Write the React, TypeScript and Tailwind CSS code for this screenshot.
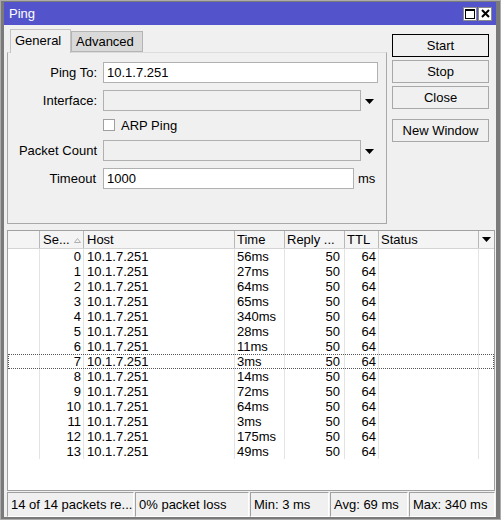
import React from 'react';

const rows = [
  { seq: 0, time: '56ms' },
  { seq: 1, time: '27ms' },
  { seq: 2, time: '64ms' },
  { seq: 3, time: '65ms' },
  { seq: 4, time: '340ms' },
  { seq: 5, time: '28ms' },
  { seq: 6, time: '11ms' },
  { seq: 7, time: '3ms' },
  { seq: 8, time: '14ms' },
  { seq: 9, time: '72ms' },
  { seq: 10, time: '64ms' },
  { seq: 11, time: '3ms' },
  { seq: 12, time: '175ms' },
  { seq: 13, time: '49ms' },
];

const DownArrow = () => (
  <svg width="9" height="5" viewBox="0 0 9 5">
    <path d="M0 0 L9 0 L4.5 5 Z" fill="#000" />
  </svg>
);

const Button = ({ label, focused }: { label: string; focused?: boolean }) => (
  <div
    className={
      'h-[23px] w-[97px] flex items-center justify-center bg-[#f0f0f0] border ' +
      (focused ? 'border-black' : 'border-[#a8a8a8]')
    }
  >
    {label}
  </div>
);

const App = () => {
  return (
    <div className="w-[501px] h-[520px] bg-[#7a7a7a] border border-[#acacac] pl-[3px] pr-[4px] pt-[1px] pb-[2px] flex flex-col font-['Liberation_Sans',Arial,sans-serif] text-[13px] leading-[15px] text-black">
      {/* title bar */}
      <div className="h-[23px] bg-[#5353cc] flex items-center justify-between pl-[5px] pr-[4px] shrink-0">
        <span className="text-white text-[13px]">Ping</span>
        <div className="flex gap-[1px]">
          <div className="w-[14px] h-[14px] bg-white border border-[#8a8a8a] flex items-center justify-center">
            <svg width="10" height="10" viewBox="0 0 10 10">
              <rect x="0.5" y="0.5" width="9" height="9" fill="none" stroke="#000" strokeWidth="1" />
              <rect x="0" y="0" width="10" height="2" fill="#000" />
            </svg>
          </div>
          <div className="w-[14px] h-[14px] bg-white border border-[#8a8a8a] flex items-center justify-center">
            <svg width="9" height="9" viewBox="0 0 9 9">
              <path d="M1 1 L8 8 M8 1 L1 8" stroke="#000" strokeWidth="2" />
            </svg>
          </div>
        </div>
      </div>

      {/* body */}
      <div className="flex-1 bg-[#f0f0f0] flex flex-col pl-[3px] pr-[1px]">
        <div className="flex">
          {/* tabs + panel */}
          <div className="w-[380px] pt-[3px] flex flex-col">
            <div className="h-[24px] flex items-end pl-[3px]">
              <div className="w-[61px] h-[24px] bg-[#f0f0f0] border-l border-t border-r border-[#c4c4c4] pl-[4px] pt-[3px] relative z-10 -mb-[1px]">
                General
              </div>
              <div className="w-[72px] h-[21px] bg-[#d9d9d9] border border-[#b4b4b4] pl-[4px] pt-[2px]">
                Advanced
              </div>
            </div>
            <div className="h-[172px] border border-[#a8a8a8] border-t-[#dcdcdc] flex flex-col">
              <div className="mt-[9px] h-[21px] flex items-center">
                <div className="w-[89px] text-right">Ping To:</div>
                <div className="ml-[6px] w-[275px] h-[21px] bg-white border border-[#b0b0b0] pl-[3px] flex items-center">
                  10.1.7.251
                </div>
              </div>
              <div className="mt-[7px] h-[21px] flex items-center">
                <div className="w-[89px] text-right">Interface:</div>
                <div className="ml-[6px] w-[258px] h-[21px] bg-[#f0f0f0] border border-[#b0b0b0]" />
                <div className="ml-[4px] mt-[1px] flex">
                  <DownArrow />
                </div>
              </div>
              <div className="mt-[6px] h-[16px] flex items-center pl-[95px]">
                <div className="w-[12px] h-[12px] bg-white border border-[#a0a0a0]" />
                <span className="ml-[6px]">ARP Ping</span>
              </div>
              <div className="mt-[7px] h-[21px] flex items-center">
                <div className="w-[89px] text-right">Packet Count</div>
                <div className="ml-[6px] w-[258px] h-[21px] bg-[#f0f0f0] border border-[#b0b0b0]" />
                <div className="ml-[4px] mt-[1px] flex">
                  <DownArrow />
                </div>
              </div>
              <div className="mt-[7px] h-[21px] flex items-center">
                <div className="w-[88px] text-right pr-[0px]">Timeout</div>
                <div className="ml-[7px] w-[251px] h-[21px] bg-white border border-[#b0b0b0] pl-[3px] flex items-center">
                  1000
                </div>
                <span className="ml-[4px]">ms</span>
              </div>
            </div>
          </div>

          {/* buttons */}
          <div className="ml-[5px] pt-[9px] flex flex-col">
            <Button label="Start" focused />
            <div className="mt-[3px]">
              <Button label="Stop" />
            </div>
            <div className="mt-[3px]">
              <Button label="Close" />
            </div>
            <div className="mt-[10px]">
              <Button label="New Window" />
            </div>
          </div>
        </div>

        {/* table */}
        <div className="mt-[6px] h-[261px] bg-white border border-[#a0a0a0] flex flex-col">
          <div className="h-[18px] flex bg-[#f4f4f4] border-b border-[#d4d4d4] shrink-0">
            <div className="w-[32px] border-r border-[#b8b8b8]" />
            <div className="w-[44px] border-r border-[#b8b8b8] pl-[3px] flex items-center relative">
              Se...
              <svg className="absolute left-[34px] top-[7px]" width="7" height="5" viewBox="0 0 7 5">
                <path d="M0.5 4.5 L3.5 0.5 L6.5 4.5 Z" fill="none" stroke="#b0b0b0" strokeWidth="1" />
              </svg>
            </div>
            <div className="w-[151px] border-r border-[#b8b8b8] pl-[3px] flex items-center">Host</div>
            <div className="w-[50px] border-r border-[#b8b8b8] pl-[2px] flex items-center">Time</div>
            <div className="w-[60px] border-r border-[#b8b8b8] pl-[2px] flex items-center">Reply ...</div>
            <div className="w-[34px] border-r border-[#b8b8b8] pl-[2px] flex items-center">TTL</div>
            <div className="w-[100px] border-r border-[#b8b8b8] pl-[2px] flex items-center">Status</div>
            <div className="flex-1 flex items-center justify-center">
              <DownArrow />
            </div>
          </div>
          {rows.map((r) => (
            <div
              key={r.seq}
              className={
                'h-[15px] flex shrink-0 ' +
                (r.seq === 7 ? 'outline outline-1 outline-dotted outline-[#555] -outline-offset-1' : '')
              }
            >
              <div className="w-[32px] border-r border-[#e4e4e4]" />
              <div className="w-[44px] border-r border-[#e4e4e4] text-right pr-[2px]">{r.seq}</div>
              <div className="w-[151px] border-r border-[#e4e4e4] pl-[3px]">10.1.7.251</div>
              <div className="w-[50px] border-r border-[#e4e4e4] pl-[2px]">{r.time}</div>
              <div className="w-[60px] border-r border-[#e4e4e4] text-right pr-[4px]">50</div>
              <div className="w-[34px] border-r border-[#e4e4e4] text-right pr-[2px]">64</div>
              <div className="w-[100px] border-r border-[#e4e4e4]" />
              <div className="flex-1" />
            </div>
          ))}
        </div>

        {/* status bar */}
        <div className="mt-[1px] h-[25px] flex gap-[1px]">
          {[
            { t: '14 of 14 packets re...', w: 'w-[127px]' },
            { t: '0% packet loss', w: 'w-[114px]' },
            { t: 'Min: 3 ms', w: 'w-[79px]' },
            { t: 'Avg: 69 ms', w: 'w-[78px]' },
            { t: 'Max: 340 ms', w: 'flex-1' },
          ].map((c) => (
            <div
              key={c.t}
              className={
                c.w +
                ' h-[25px] border border-t-[#a0a0a0] border-l-[#a0a0a0] border-r-white border-b-white pl-[3px] flex items-center whitespace-nowrap overflow-hidden'
              }
            >
              {c.t}
            </div>
          ))}
        </div>
      </div>
    </div>
  );
};

export default App;
